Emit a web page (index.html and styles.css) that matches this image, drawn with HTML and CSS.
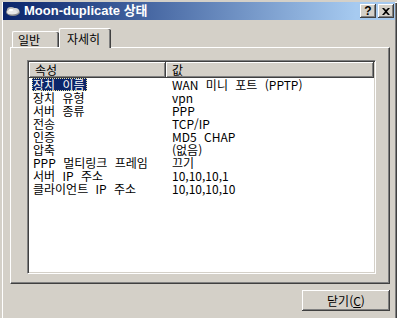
FILE: index.html
```html
<!DOCTYPE html>
<html lang="ko">
<head>
<meta charset="utf-8">
<title>Moon-duplicate 상태</title>
<link rel="stylesheet" href="styles.css">
</head>
<body>
<div class="window">
  <div class="titlebar">
    <svg class="appicon" width="16" height="14" viewBox="0 0 16 14">
      <ellipse cx="8" cy="8" rx="7" ry="4" fill="#8c8c8c"/>
      <ellipse cx="6" cy="6" rx="4" ry="3" fill="#b8b8b8"/>
      <ellipse cx="10" cy="7" rx="4" ry="3" fill="#d8d8d8"/>
      <ellipse cx="7" cy="8" rx="5" ry="2.5" fill="#e8e8e8"/>
      <ellipse cx="6" cy="6" rx="2" ry="1.2" fill="#ffffff"/>
    </svg>
    <span class="title">Moon-duplicate 상태</span>
    <div class="capbtns">
      <span class="capbtn help">?</span>
      <span class="capbtn close"><svg width="8" height="7" viewBox="0 0 8 7"><path d="M0 0h2l2 2 2-2h2L5 3.5 8 7H6L4 5 2 7H0l3-3.5z" fill="#000"/></svg></span>
    </div>
  </div>
  <div class="tabs">
    <div class="tab t1">일반</div>
    <div class="tab active t2">자세히</div>
  </div>
  <div class="panel">
    <div class="listbox">
      <div class="lv-header">
        <div class="hcell c1">속성</div>
        <div class="hcell c2">값</div>
      </div>
      <div class="lv-body">
        <div class="row"><div class="c1"><span class="sel">장치 이름</span></div><div class="c2">WAN 미니 포트 (PPTP)</div></div>
        <div class="row"><div class="c1"><span class="lbl">장치 유형</span></div><div class="c2">vpn</div></div>
        <div class="row"><div class="c1"><span class="lbl">서버 종류</span></div><div class="c2">PPP</div></div>
        <div class="row"><div class="c1"><span class="lbl">전송</span></div><div class="c2">TCP/IP</div></div>
        <div class="row"><div class="c1"><span class="lbl">인증</span></div><div class="c2">MD5 CHAP</div></div>
        <div class="row"><div class="c1"><span class="lbl">압축</span></div><div class="c2">(없음)</div></div>
        <div class="row"><div class="c1"><span class="lbl">PPP 멀티링크 프레임</span></div><div class="c2">끄기</div></div>
        <div class="row"><div class="c1"><span class="lbl">서버 IP 주소</span></div><div class="c2">10,10,10,1</div></div>
        <div class="row"><div class="c1"><span class="lbl">클라이언트 IP 주소</span></div><div class="c2">10,10,10,10</div></div>
      </div>
    </div>
  </div>
  <div class="footer">
    <button class="btn">닫기(<u>C</u>)</button>
  </div>
</div>
</body>
</html>
```

FILE: styles.css
```css
html, body {
  margin: 0;
  padding: 0;
  background: #d4d0c8;
  overflow: hidden;
}
body {
  width: 397px;
  height: 318px;
  font-family: "Noto Sans CJK KR", "Liberation Sans", sans-serif;
  font-size: 12px;
  color: #000;
}
.window {
  box-sizing: border-box;
  width: 397px;
  height: 318px;
  padding: 2px 2px 0 3px;
  display: flex;
  flex-direction: column;
  background: #d4d0c8;
  box-shadow: inset 2px 2px #d4d0c8, inset 3px 3px #ffffff, inset -1px 0 #404040, inset -2px 0 #808080;
}
.titlebar {
  height: 18px;
  flex: none;
  display: flex;
  align-items: center;
  background: linear-gradient(to right, #0a246a 0%, #3a5a98 30%, #a6caf0 90%, #a6caf0 100%);
  color: #fff;
}
.appicon {
  margin-left: 2px;
  flex: none;
}
.title {
  margin-left: 3px;
  font-family: "Liberation Sans", "Noto Sans CJK KR", sans-serif;
  font-weight: bold;
  font-size: 13px;
  line-height: 18px;
  white-space: nowrap;
}
.capbtns {
  margin-left: auto;
  margin-right: 1px;
  display: flex;
  gap: 2px;
}
.capbtn {
  box-sizing: border-box;
  width: 16px;
  height: 14px;
  background: #d4d0c8;
  box-shadow: inset -1px -1px #404040, inset 1px 1px #ffffff, inset -2px -2px #808080;
  display: flex;
  align-items: center;
  justify-content: center;
  color: #000;
  font-family: "Liberation Sans", sans-serif;
  font-weight: bold;
  font-size: 12px;
  line-height: 14px;
}
.capbtn.help {
  padding-bottom: 1px;
}
.capbtn svg {
  display: block;
}
.tabs {
  height: 27px;
  flex: none;
  display: flex;
  align-items: flex-end;
  padding-left: 9px;
}
.tab {
  box-sizing: border-box;
  border-top: 1px solid #ffffff;
  border-left: 1px solid #ffffff;
  border-top-left-radius: 2px;
  border-top-right-radius: 2px;
  box-shadow: inset -1px 0 #404040, inset -2px 0 #808080;
  display: flex;
  align-items: center;
  line-height: 13px;
  background: #d4d0c8;
}
.tab.t1 {
  width: 47px;
  height: 16px;
  padding-left: 5px;
}
.tab.t2 {
  width: 52px;
  height: 20px;
  padding-left: 7px;
  margin-bottom: -1px;
  position: relative;
  z-index: 1;
}
.panel {
  box-sizing: border-box;
  height: 237px;
  flex: none;
  margin: 0 5px 0 7px;
  border-top: 1px solid #ffffff;
  border-left: 1px solid #ffffff;
  border-right: 1px solid #404040;
  border-bottom: 1px solid #404040;
  box-shadow: inset -1px -1px #808080;
  display: flex;
  flex-direction: column;
  padding: 12px 13px 9px 16px;
}
.listbox {
  flex: 1;
  background: #ffffff;
  border: 1px solid;
  border-color: #808080 #ffffff #ffffff #808080;
  box-shadow: inset 1px 1px #404040, inset -1px -1px #d4d0c8;
  padding: 1px;
  display: flex;
  flex-direction: column;
  overflow: hidden;
}
.lv-header {
  display: flex;
  height: 16px;
  flex: none;
}
.hcell {
  box-sizing: border-box;
  background: #d4d0c8;
  box-shadow: inset -1px -1px #404040, inset 1px 1px #ffffff, inset -2px -2px #808080;
  line-height: 15px;
  padding-left: 6px;
}
.hcell.c1 {
  width: 137px;
  flex: none;
}
.hcell.c2 {
  flex: 1;
}
.lv-body {
  display: flex;
  flex-direction: column;
  word-spacing: 4px;
}
.row {
  display: flex;
  height: 13px;
  line-height: 13px;
  white-space: nowrap;
}
.row .c1 {
  width: 137px;
  flex: none;
  padding-left: 3px;
  box-sizing: border-box;
}
.row .c2 {
  padding-left: 6px;
}
.lbl {
  padding: 0 1px;
}
.sel {
  display: inline-block;
  height: 13px;
  padding: 0 2px 0 1px;
  background: #0a246a;
  color: #ffffff;
  outline: 1px dotted #e8e0a0;
  outline-offset: -1px;
}
.footer {
  flex: 1;
  display: flex;
  justify-content: flex-end;
  align-items: flex-start;
  padding-top: 6px;
  padding-right: 5px;
}
.btn {
  box-sizing: border-box;
  width: 88px;
  height: 21px;
  margin: 0;
  padding: 0;
  border: none;
  background: #d4d0c8;
  box-shadow: inset -1px -1px #404040, inset 1px 1px #ffffff, inset -2px -2px #808080;
  font-family: "Noto Sans CJK KR", "Liberation Sans", sans-serif;
  font-size: 12px;
  color: #000;
  line-height: 19px;
}
.btn u {
  text-decoration: underline;
}
```
